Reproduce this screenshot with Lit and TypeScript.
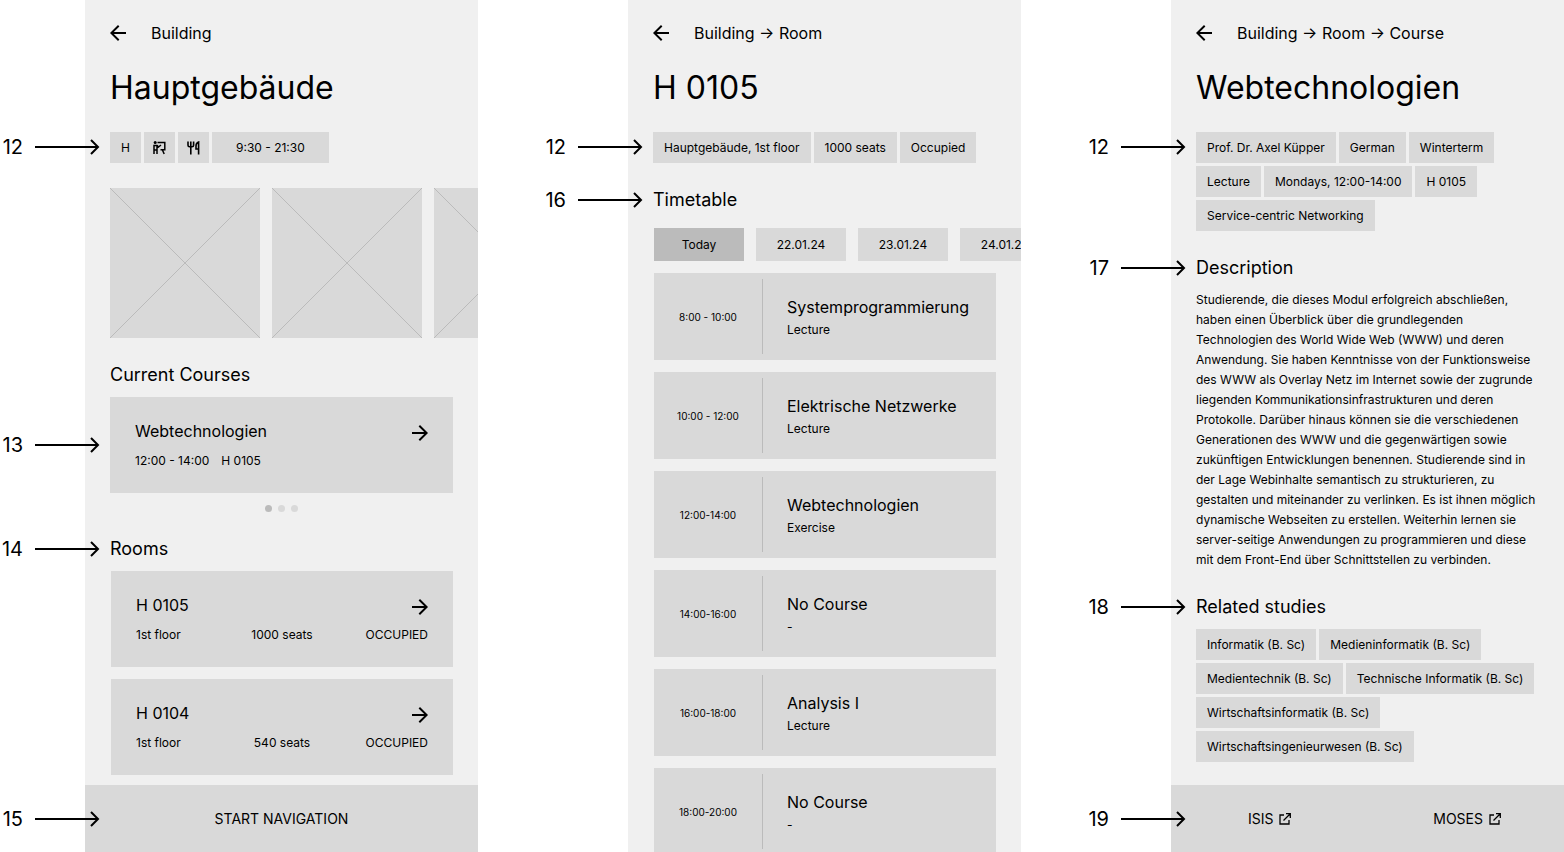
import { LitElement, html, css, nothing } from "lit";
import { customElement, property } from "lit/decorators.js";

const arrowRight = html`<svg class="icon" width="16" height="16" viewBox="0 0 16 16" aria-hidden="true"><path d="M0 7h12.2L6.6 1.4 8 0l8 8-8 8-1.4-1.4L12.2 9H0z" fill="currentColor"></path></svg>`;
const arrowLeft = html`<svg class="icon" width="16" height="16" viewBox="0 0 16 16" aria-hidden="true"><path d="M16 7H3.8l5.6-5.6L8 0 0 8l8 8 1.4-1.4L3.8 9H16z" fill="currentColor"></path></svg>`;
const external = html`<svg class="icon" width="12" height="12" viewBox="0 0 12 12" aria-hidden="true"><path d="M5 2H1v9h9V7M7 .7h4.3V5M11 1 4.5 7.5" fill="none" stroke="currentColor" stroke-width="1.3"></path></svg>`;
const lectern = html`<svg class="icon" width="13" height="14" viewBox="0 0 13 14" role="img" aria-label="Lecture hall"><circle cx="2.2" cy="1.6" r="1.5" fill="currentColor"></circle><path d="M4.5 1.5h7.3v7.200H7.500M9.300 8.700l1.900 4.300M1 13V4.500h3.200L5.500 6 8 4M4 4.500V13M1 9h3" fill="none" stroke="currentColor" stroke-width="1.5"></path></svg>`;
const cutlery = html`<svg class="icon" width="13" height="14" viewBox="0 0 13 14" role="img" aria-label="Canteen"><path d="M1 .5v3.700c0 1 .7 1.600 1.600 1.600H5c.9 0 1.600-.6 1.600-1.600V.5M3.800.5V13.500M11.600 13.500V1C10 1.500 9 3 9 5v3h2.600" fill="none" stroke="currentColor" stroke-width="1.6"></path></svg>`;

@customElement("call-out")
class CallOut extends LitElement {
  @property() label = "";

  static styles = css`
    :host {
      position: absolute;
      right: calc(100% + 10px);
      top: 50%;
      transform: translateY(-50%);
      display: flex;
      align-items: center;
      gap: 11px;
      font-size: 20px;
      line-height: 24px;
      white-space: nowrap;
    }
    .arrow {
      display: block;
    }
  `;

  render() {
    return html`<span>${this.label}</span>
      <svg class="arrow" width="66" height="16" viewBox="0 0 66 16" aria-hidden="true">
        <path d="M1 8h63M57 1l7 7-7 7" fill="none" stroke="currentColor" stroke-width="2"></path>
      </svg>`;
  }
}

const tags = (items: unknown[], label: string | null) => html`
  <div class="tags-row">
    ${label ? html`<div class="first-line"><call-out label=${label}></call-out></div>` : nothing}
    <ul class="tags">
      ${items.map((t) => html`<li class="tag">${t}</li>`)}
    </ul>
  </div>
`;

const heading = (text: string, label?: string) => html`
  <h2 class="heading">${text}${label ? html`<call-out label=${label}></call-out>` : nothing}</h2>
`;

const topbar = (crumbs: string) => html`
  <header class="topbar">
    <button class="back" aria-label="Back">${arrowLeft}</button>
    <span class="crumbs">${crumbs}</span>
  </header>
`;

const rooms = [
  { name: "H 0105", floor: "1st floor", seats: "1000 seats", state: "OCCUPIED" },
  { name: "H 0104", floor: "1st floor", seats: "540 seats", state: "OCCUPIED" },
];

const days = ["Today", "22.01.24", "23.01.24", "24.01.24"];

const slots = [
  ["8:00 - 10:00", "Systemprogrammierung", "Lecture"],
  ["10:00 - 12:00", "Elektrische Netzwerke", "Lecture"],
  ["12:00-14:00", "Webtechnologien", "Exercise"],
  ["14:00-16:00", "No Course", "-"],
  ["16:00-18:00", "Analysis I", "Lecture"],
  ["18:00-20:00", "No Course", "-"],
];

const studies = [
  "Informatik (B. Sc)",
  "Medieninformatik (B. Sc)",
  "Medientechnik (B. Sc)",
  "Technische Informatik (B. Sc)",
  "Wirtschaftsinformatik (B. Sc)",
  "Wirtschaftsingenieurwesen (B. Sc)",
];

@customElement("app-root")
class AppRoot extends LitElement {
  static styles = css`
    :host {
      display: block;
      height: 100vh;
      overflow: hidden;
      background: #ffffff;
      color: #000000;
      font-family: Inter, sans-serif;
      font-size: 12px;
      line-height: 15px;
    }
    * {
      box-sizing: border-box;
    }
    .board {
      display: grid;
      grid-template-columns: repeat(3, minmax(0, 1fr));
      column-gap: 150px;
      padding-left: 85px;
      height: 100%;
    }
    .phone {
      display: flex;
      flex-direction: column;
      min-height: 0;
      background: #f0f0f0;
    }
    .content {
      flex: 1;
      min-height: 0;
      padding: 23px 25px 0;
    }
    .icon {
      display: block;
      flex: none;
    }
    button {
      border: 0;
      margin: 0;
      padding: 0;
      background: none;
      color: inherit;
      font: inherit;
      text-align: inherit;
    }
    .topbar {
      display: flex;
      align-items: center;
      gap: 25px;
      font-size: 16px;
      line-height: 20px;
    }
    .title {
      margin: 25px 0 24px;
      font-size: 32px;
      line-height: 40px;
      font-weight: 400;
    }
    .tags-row {
      position: relative;
    }
    .first-line {
      position: absolute;
      left: 0;
      top: 0;
      height: 30px;
    }
    .tags {
      display: flex;
      flex-wrap: wrap;
      gap: 3px;
      margin: 0;
      padding: 0;
      list-style: none;
    }
    .tag {
      display: flex;
      align-items: center;
      justify-content: center;
      height: 31px;
      min-width: 31px;
      padding: 0 11px;
      background: #d9d9d9;
    }
    .tag:has(svg) {
      padding: 0 9px;
    }
    .tag:has(time) {
      padding: 0 24px;
    }
    .heading {
      position: relative;
      margin: 0;
      font-size: 18px;
      line-height: 22px;
      font-weight: 400;
    }
    .gallery {
      display: flex;
      gap: 12px;
      margin: 25px -25px 26px 0;
      overflow: hidden;
    }
    .photo {
      flex: none;
      width: 150px;
      height: 150px;
      background: #d9d9d9;
      color: #bbbbbb;
    }
    .card {
      display: flex;
      flex-direction: column;
      gap: 12px;
      width: 100%;
      height: 96px;
      padding: 24px 25px;
      background: #d9d9d9;
    }
    .card-wrap {
      position: relative;
      margin-top: 11px;
    }
    .card-top {
      display: flex;
      justify-content: space-between;
      align-items: flex-end;
      width: 100%;
      font-size: 16px;
      line-height: 20px;
    }
    .card-facts {
      display: grid;
      grid-template-columns: 1fr auto 1fr;
      width: 100%;
    }
    .card-facts.close {
      grid-template-columns: auto 1fr;
      column-gap: 12px;
    }
    .fact-end {
      text-align: right;
    }
    .dots {
      display: flex;
      justify-content: center;
      gap: 6px;
      margin: 12px 0 26px;
    }
    .dot {
      width: 7px;
      height: 7px;
      border-radius: 50%;
      background: #d9d9d9;
    }
    .dot.on {
      background: #bbbbbb;
    }
    .rooms {
      display: flex;
      flex-direction: column;
      gap: 12px;
      margin: 11px 0 0 1px;
    }
    .footer {
      position: relative;
      flex: none;
      display: flex;
      align-items: center;
      justify-content: center;
      height: 67px;
      background: #d9d9d9;
      font-size: 14px;
      line-height: 18px;
    }
    .footer-mark {
      position: absolute;
      left: 25px;
      top: 50%;
    }
    .footer.links {
      justify-content: space-between;
      padding: 0 63px 0 77px;
    }
    .link {
      display: flex;
      align-items: center;
      gap: 6px;
      color: inherit;
      text-decoration: none;
    }
    .days {
      display: flex;
      gap: 12px;
      margin: 17px -25px 12px 1px;
      overflow: hidden;
    }
    .day {
      flex: none;
      width: 90px;
      height: 33px;
      text-align: center;
      background: #d9d9d9;
    }
    .day.on {
      background: #bbbbbb;
    }
    .slots {
      display: flex;
      flex-direction: column;
      gap: 12px;
      margin: 0 0 0 1px;
      padding: 0;
      list-style: none;
    }
    .slot {
      display: grid;
      grid-template-columns: 108px 1fr;
      height: 87px;
      padding: 6px 0;
      background: #d9d9d9;
    }
    .slot-time {
      display: flex;
      align-items: center;
      justify-content: center;
      font-size: 10px;
      line-height: 14px;
    }
    .slot-body {
      display: flex;
      flex-direction: column;
      justify-content: center;
      gap: 5px;
      padding-left: 24px;
      border-left: 1px solid #bbbbbb;
    }
    .slot-name {
      font-size: 16px;
      line-height: 20px;
    }
    .section {
      margin-top: 26px;
    }
    .text {
      margin: 11px 0 26px;
      line-height: 20px;
    }
    .studies {
      margin-top: 11px;
    }
  `;

  private building() {
    return html`<section class="phone">
      <div class="content">
        ${topbar("Building")}
        <h1 class="title">Hauptgebäude</h1>
        ${tags(["H", lectern, cutlery, html`<time>9:30 - 21:30</time>`], "12")}
        <div class="gallery">
          ${[1, 2, 3].map(
            () => html`<svg class="photo" viewBox="0 0 150 150" aria-hidden="true">
              <path d="M0 0l150 150M150 0L0 150" stroke="currentColor" fill="none"></path>
            </svg>`
          )}
        </div>
        ${heading("Current Courses")}
        <div class="card-wrap">
          <call-out label="13"></call-out>
          <button class="card">
            <span class="card-top">Webtechnologien ${arrowRight}</span>
            <span class="card-facts close"><span>12:00 - 14:00</span><span>H 0105</span></span>
          </button>
        </div>
        <div class="dots">
          <span class="dot on"></span><span class="dot"></span><span class="dot"></span>
        </div>
        ${heading("Rooms", "14")}
        <div class="rooms">
          ${rooms.map(
            (r) => html`<button class="card">
              <span class="card-top">${r.name} ${arrowRight}</span>
              <span class="card-facts">
                <span>${r.floor}</span><span>${r.seats}</span><span class="fact-end">${r.state}</span>
              </span>
            </button>`
          )}
        </div>
      </div>
      <button class="footer">
        <span class="footer-mark"><call-out label="15"></call-out></span>START NAVIGATION
      </button>
    </section>`;
  }

  private room() {
    return html`<section class="phone">
      <div class="content">
        ${topbar("Building → Room")}
        <h1 class="title">H 0105</h1>
        ${tags(["Hauptgebäude, 1st floor", "1000 seats", "Occupied"], "12")}
        <div class="section">${heading("Timetable", "16")}</div>
        <div class="days">
          ${days.map((d, i) => html`<button class="day ${i === 0 ? "on" : ""}">${d}</button>`)}
        </div>
        <ul class="slots">
          ${slots.map(
            ([time, name, kind]) => html`<li class="slot">
              <span class="slot-time">${time}</span>
              <div class="slot-body"><span class="slot-name">${name}</span><span>${kind}</span></div>
            </li>`
          )}
        </ul>
      </div>
    </section>`;
  }

  private course() {
    return html`<section class="phone">
      <div class="content">
        ${topbar("Building → Room → Course")}
        <h1 class="title">Webtechnologien</h1>
        ${tags(
          ["Prof. Dr. Axel Küpper", "German", "Winterterm", "Lecture", "Mondays, 12:00-14:00", "H 0105", "Service-centric Networking"],
          "12"
        )}
        <div class="section">${heading("Description", "17")}</div>
        <p class="text">
          Studierende, die dieses Modul erfolgreich abschließen, haben einen Überblick über die grundlegenden
          Technologien des World Wide Web (WWW) und deren Anwendung. Sie haben Kenntnisse von der Funktionsweise des
          WWW als Overlay Netz im Internet sowie der zugrunde liegenden Kommunikationsinfrastrukturen und deren
          Protokolle. Darüber hinaus können sie die verschiedenen Generationen des WWW und die gegenwärtigen sowie
          zukünftigen Entwicklungen benennen. Studierende sind in der Lage Webinhalte semantisch zu strukturieren, zu
          gestalten und miteinander zu verlinken. Es ist ihnen möglich dynamische Webseiten zu erstellen. Weiterhin
          lernen sie server-seitige Anwendungen zu programmieren und diese mit dem Front-End über Schnittstellen zu
          verbinden.
        </p>
        ${heading("Related studies", "18")}
        <div class="studies">${tags(studies, null)}</div>
      </div>
      <footer class="footer links">
        <span class="footer-mark"><call-out label="19"></call-out></span>
        <a class="link" href="#isis">ISIS ${external}</a>
        <a class="link" href="#moses">MOSES ${external}</a>
      </footer>
    </section>`;
  }

  render() {
    return html`<main class="board">${this.building()}${this.room()}${this.course()}</main>`;
  }
}
